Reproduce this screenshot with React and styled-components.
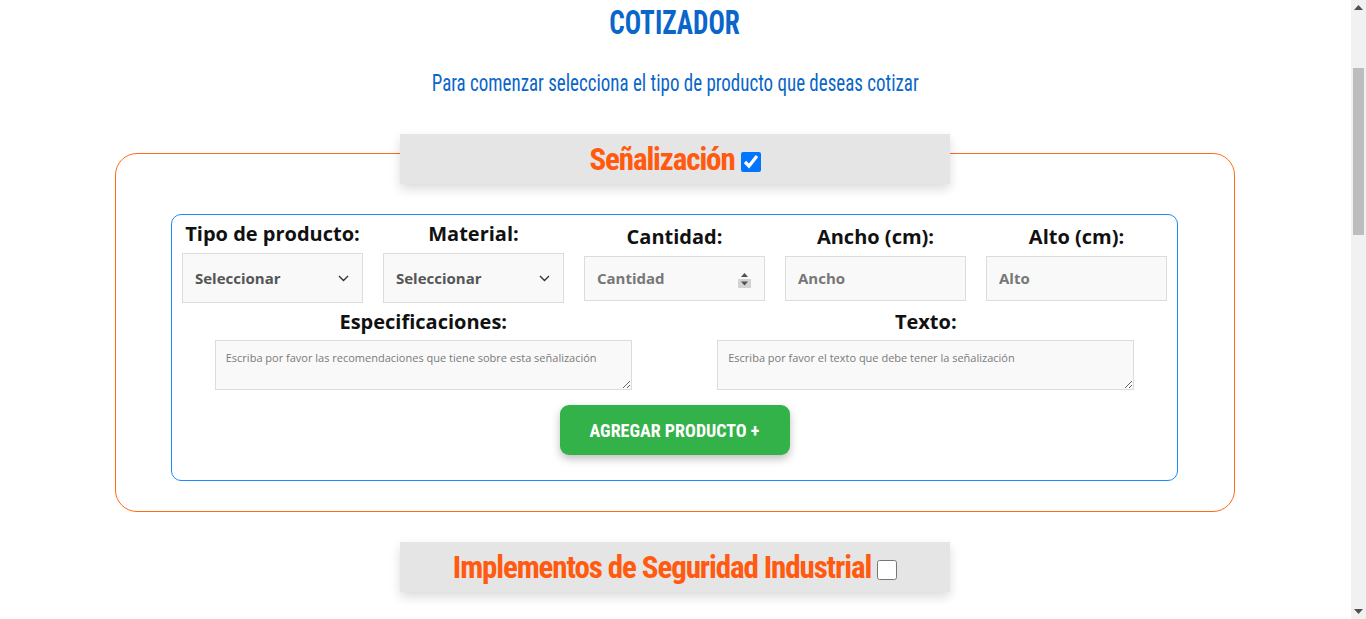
import React from 'react';
import styled, { createGlobalStyle } from 'styled-components';

const condensed = `"Roboto", "Liberation Sans Narrow", sans-serif`;
const body = `"Open Sans", "Noto Sans", sans-serif`;

const GlobalStyle = createGlobalStyle`
  html, body {
    margin: 0;
    padding: 0;
    background: #ffffff;
  }
  body {
    font-family: ${body};
  }
  * {
    box-sizing: border-box;
  }
`;

const Page = styled.div`
  width: calc(100% - 16px);
  min-height: 2170px;
  text-align: center;
`;

const Scrollbar = styled.div`
  position: fixed;
  top: 0;
  right: 0;
  width: 15px;
  height: 100vh;
  background: #f1f1f1;
  display: flex;
  flex-direction: column;
  align-items: center;
  justify-content: space-between;
  padding: 5px 0;
`;

const ScrollThumb = styled.div`
  position: absolute;
  top: 68px;
  left: 2px;
  width: 11px;
  height: 167px;
  background: #bdbdbd;
`;

const Title = styled.h1`
  margin: 0;
  padding-top: 4px;
  font-family: ${condensed};
  font-stretch: 75%;
  font-weight: 700;
  font-size: 34px;
  line-height: 36px;
  color: #0a66c9;
`;

const Subtitle = styled.p`
  margin: 29px 0 37px;
  font-family: ${condensed};
  font-stretch: 75%;
  font-size: 24px;
  line-height: 28px;
  color: #0a66c9;
`;

const Squeeze = styled.span`
  display: inline-block;
  transform: scaleX(${props => props.x});
  transform-origin: center;
`;

const Section = styled.section`
  width: 1120px;
  margin: 0 auto 30px;
`;

const SectionHeader = styled.div`
  position: relative;
  z-index: 1;
  width: 550px;
  height: 50px;
  margin: 0 auto ${props => (props.open ? '-31px' : '0')};
  background: #e5e5e5;
  box-shadow: 0 5px 10px rgba(0, 0, 0, 0.14);
  display: flex;
  align-items: center;
  justify-content: center;
  gap: 6px;
`;

const SectionTitle = styled.span`
  font-family: ${condensed};
  font-stretch: 75%;
  font-weight: 700;
  font-size: 31px;
  letter-spacing: -1.1px;
  white-space: nowrap;
  color: #ff5a10;
`;

const Check = styled.input`
  width: 20px;
  height: 20px;
  margin: 6px 0 0;
  accent-color: #0075ff;
`;

const SectionBody = styled.div`
  border: 1px solid #ff6a1a;
  border-radius: 22px;
  padding: 60px 56px 30px 55px;
`;

const FormCard = styled.div`
  border: 1px solid #1a8cff;
  border-radius: 10px;
  padding: 6px 10px 25px;
  display: flex;
  flex-direction: column;
  align-items: center;
`;

const FieldRow = styled.div`
  width: 100%;
  display: grid;
  grid-template-columns: repeat(${props => props.cols}, minmax(0, 1fr));
  column-gap: 20px;
  align-items: center;
  margin-top: ${props => props.top || 0}px;
`;

const Field = styled.div`
  display: flex;
  flex-direction: column;
  align-items: center;
`;

const Label = styled.label`
  font-family: ${body};
  font-weight: 700;
  font-size: 20px;
  line-height: 26px;
  white-space: nowrap;
  color: #111;
  margin-bottom: ${props => props.gap || 6}px;
`;

const SelectBox = styled.div`
  width: 100%;
  height: 50px;
  background: #f9f9f9;
  border: 1px solid #dcdcdc;
  display: flex;
  align-items: center;
  justify-content: space-between;
  padding: 0 13px 0 12px;
  font-size: 15px;
  font-weight: 700;
  color: #555;
`;

const InputBox = styled.div`
  position: relative;
  width: 100%;
  height: 45px;
  background: #f9f9f9;
  border: 1px solid #dcdcdc;
  display: flex;
  align-items: center;
  padding: 0 12px;
`;

const Input = styled.input`
  flex: 1;
  min-width: 0;
  border: none;
  outline: none;
  background: transparent;
  font-family: ${body};
  font-size: 15px;
  font-weight: 700;
  color: #555;
  padding: 0;

  &::placeholder {
    color: #777;
  }
`;

const Spinner = styled.svg`
  position: absolute;
  right: 12px;
  top: 13px;
`;

const TextArea = styled.textarea`
  width: 417px;
  height: 50px;
  background: #f9f9f9;
  border: 1px solid #dcdcdc;
  padding: 9px 10px;
  font-family: ${body};
  font-size: 11px;
  line-height: 16px;
  color: #555;
  resize: vertical;
  outline: none;

  &::placeholder {
    color: #7a7a7a;
  }
`;

const AddButton = styled.button`
  margin-top: 15px;
  width: 230px;
  height: 50px;
  border: none;
  border-radius: 9px;
  background: #33b24a;
  box-shadow: 0 4px 8px rgba(0, 0, 0, 0.25);
  color: #fff;
  font-family: ${condensed};
  font-stretch: 75%;
  font-weight: 700;
  font-size: 18px;
  cursor: pointer;
`;

const Chevron = () => (
  <svg width="11" height="7" viewBox="0 0 11 7">
    <path d="M1 1 L5.5 5.5 L10 1" fill="none" stroke="#333" strokeWidth="1.4" />
  </svg>
);

const Arrow = ({ down }) => (
  <svg width="9" height="5" viewBox="0 0 9 5">
    <path d={down ? 'M0 0 L9 0 L4.5 5 Z' : 'M0 5 L9 5 L4.5 0 Z'} fill="#505050" />
  </svg>
);

const selects = ['Tipo de producto:', 'Material:'];
const inputs = [
  { label: 'Cantidad:', placeholder: 'Cantidad', spinner: true },
  { label: 'Ancho (cm):', placeholder: 'Ancho' },
  { label: 'Alto (cm):', placeholder: 'Alto' },
];
const notes = [
  { label: 'Especificaciones:', placeholder: 'Escriba por favor las recomendaciones que tiene sobre esta señalización' },
  { label: 'Texto:', placeholder: 'Escriba por favor el texto que debe tener la señalización' },
];

export default function App() {
  return (
    <Page>
      <GlobalStyle />
      <Title><Squeeze x={0.8}>COTIZADOR</Squeeze></Title>
      <Subtitle><Squeeze x={0.79}>Para comenzar selecciona el tipo de producto que deseas cotizar</Squeeze></Subtitle>

      <Section>
        <SectionHeader open>
          <SectionTitle>Señalización</SectionTitle>
          <Check type="checkbox" defaultChecked />
        </SectionHeader>
        <SectionBody>
          <FormCard>
            <FieldRow cols={5}>
              {selects.map(label => (
                <Field key={label}>
                  <Label>{label}</Label>
                  <SelectBox>
                    Seleccionar
                    <Chevron />
                  </SelectBox>
                </Field>
              ))}
              {inputs.map(item => (
                <Field key={item.label}>
                  <Label>{item.label}</Label>
                  <InputBox>
                    <Input placeholder={item.placeholder} />
                    {item.spinner && (
                      <Spinner width="15" height="18" viewBox="0 0 15 18">
                        <rect x="1" y="9" width="13" height="9" fill="#d3d3d3" />
                        <path d="M4 7 L7.5 3 L11 7 Z" fill="#505050" />
                        <path d="M4 11.5 L7.5 15.5 L11 11.5 Z" fill="#505050" />
                      </Spinner>
                    )}
                  </InputBox>
                </Field>
              ))}
            </FieldRow>
            <FieldRow cols={2} top={6}>
              {notes.map(item => (
                <Field key={item.label}>
                  <Label gap={5}>{item.label}</Label>
                  <TextArea placeholder={item.placeholder} />
                </Field>
              ))}
            </FieldRow>
            <AddButton>AGREGAR PRODUCTO +</AddButton>
          </FormCard>
        </SectionBody>
      </Section>

      <Section>
        <SectionHeader>
          <SectionTitle>Implementos de Seguridad Industrial</SectionTitle>
          <Check type="checkbox" />
        </SectionHeader>
      </Section>

      <Scrollbar>
        <Arrow />
        <ScrollThumb />
        <Arrow down />
      </Scrollbar>
    </Page>
  );
}
